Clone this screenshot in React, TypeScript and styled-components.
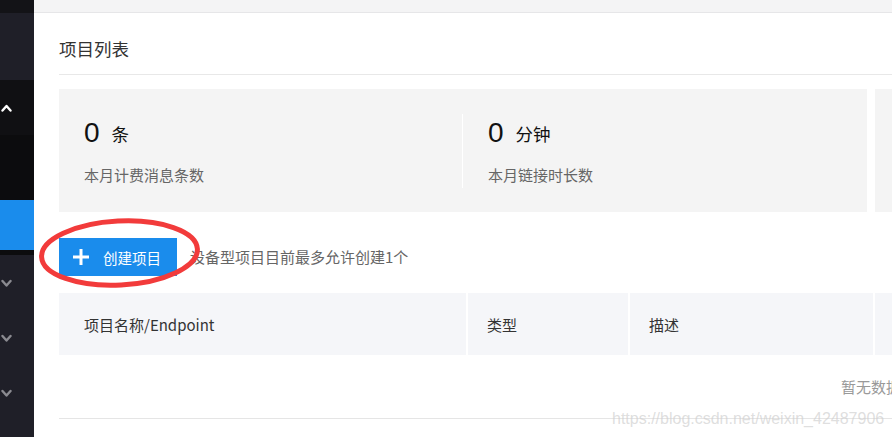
import React from "react";
import styled, { createGlobalStyle } from "styled-components";

const GlobalStyle = createGlobalStyle`
  html, body { margin: 0; padding: 0; background: #fff; overflow: hidden; }
  body { font-family: "Noto Sans CJK SC", "Noto Sans", sans-serif; }
  * { box-sizing: border-box; }
`;

const Page = styled.div`
  display: flex;
  width: 892px;
  height: 437px;
  overflow: hidden;
  position: relative;
`;

const Sidebar = styled.nav`
  width: 34px;
  flex: 0 0 34px;
  display: flex;
  flex-direction: column;
  background: #1f1f28;
`;

const MenuBlock = styled.div<{ $h: number; $bg: string }>`
  height: ${(p) => p.$h}px;
  flex: 0 0 ${(p) => p.$h}px;
  background: ${(p) => p.$bg};
  display: flex;
  align-items: center;
  padding-left: 1px;
`;

const Main = styled.main`
  flex: 1;
  min-width: 0;
  display: flex;
  flex-direction: column;
  overflow: hidden;
`;

const TopBar = styled.div`
  height: 13px;
  flex: 0 0 13px;
  background: #f4f4f5;
  border-bottom: 1px solid #e6e6e8;
`;

const Content = styled.div`
  width: 1674px;
  padding: 0 25px;
  display: flex;
  flex-direction: column;
`;

const TitleRow = styled.div`
  padding: 24px 0 14px;
  border-bottom: 1px solid #e8e8e8;
  font-size: 17.5px;
  line-height: 23px;
  color: #333;
`;

const StatsRow = styled.div`
  margin-top: 14px;
  display: grid;
  grid-template-columns: 808px 808px;
  gap: 8px;
`;

const StatCard = styled.div`
  height: 123px;
  background: #f4f4f4;
  display: grid;
  grid-template-columns: 403px 1fr;
  align-items: center;
`;

const StatItem = styled.div<{ $divider?: boolean }>`
  height: 74px;
  padding-left: 25px;
  border-left: ${(p) => (p.$divider ? "1px solid #ffffff" : "none")};
  display: flex;
  flex-direction: column;
`;

const StatValue = styled.div`
  height: 38px;
  display: flex;
  align-items: center;
  gap: 12px;
  color: #111;
`;

const Num = styled.span`
  font-size: 28px;
  line-height: 38px;
  font-family: "Liberation Sans", "Noto Sans", sans-serif;
`;

const Unit = styled.span`
  font-size: 17.5px;
  line-height: 24px;
  margin-top: 3px;
`;

const StatLabel = styled.div`
  margin-top: 13px;
  font-size: 15px;
  line-height: 20px;
  color: #666;
`;

const ActionRow = styled.div`
  position: relative;
  margin-top: 26px;
  height: 38px;
  display: flex;
  align-items: center;
  gap: 13px;
`;

const PrimaryButton = styled.button`
  width: 118px;
  height: 38px;
  border: none;
  background: #1a8cec;
  color: #fff;
  display: flex;
  align-items: center;
  padding: 0 0 0 13px;
  font-family: inherit;
  font-size: 14.5px;
  cursor: pointer;
`;

const PlusBox = styled.span`
  width: 18px;
  height: 18px;
  margin-right: 13px;
  display: inline-flex;
`;

const Hint = styled.span`
  font-size: 15px;
  line-height: 20px;
  color: #666;
`;

const Annotation = styled.svg`
  position: absolute;
  left: -22px;
  top: -22px;
  width: 170px;
  height: 76px;
  overflow: visible;
  pointer-events: none;
`;

const Table = styled.div`
  margin-top: 17px;
  width: 1624px;
  border-bottom: 1px solid #e5e5e5;
`;

const HeaderRow = styled.div`
  height: 62px;
  display: grid;
  grid-template-columns: 407px 162px 245px 1fr;
  background: #f5f6f9;
`;

const HeaderCell = styled.div<{ $pad: number; $first?: boolean }>`
  display: flex;
  align-items: center;
  padding-left: ${(p) => p.$pad}px;
  border-left: ${(p) => (p.$first ? "none" : "2px solid #fff")};
  font-size: 15px;
  color: #333;
`;

const EmptyRow = styled.div`
  height: 63px;
  display: flex;
  align-items: center;
  justify-content: center;
  padding-bottom: 1px;
  font-size: 15px;
  color: #999;
`;

const Watermark = styled.div`
  position: absolute;
  left: 612px;
  top: 409px;
  font-family: "Liberation Sans", Arial, sans-serif;
  font-size: 16px;
  line-height: 20px;
  color: rgba(205, 205, 205, 0.65);
  pointer-events: none;
  white-space: nowrap;
`;

const Chevron = ({ up, color }: { up?: boolean; color: string }) => (
  <svg width="11" height="8" viewBox="0 0 11 8">
    <polyline
      points={up ? "1.5,6.5 5.5,2 9.5,6.5" : "1.5,2 5.5,6.5 9.5,2"}
      fill="none"
      stroke={color}
      strokeWidth="2.4"
      strokeLinecap="round"
      strokeLinejoin="round"
    />
  </svg>
);

const menu: { h: number; bg: string; chevron?: "up" | "down" }[] = [
  { h: 13, bg: "#131317" },
  { h: 67, bg: "#1f1f28" },
  { h: 55, bg: "#101013", chevron: "up" },
  { h: 65, bg: "#0c0c0e" },
  { h: 50, bg: "#1a8cec" },
  { h: 5, bg: "#0c0c0e" },
  { h: 55, bg: "#1f1f28", chevron: "down" },
  { h: 55, bg: "#1f1f28", chevron: "down" },
  { h: 55, bg: "#1f1f28", chevron: "down" },
];

export default function App() {
  return (
    <>
      <GlobalStyle />
      <Page>
        <Sidebar>
          {menu.map((m, i) => (
            <MenuBlock key={i} $h={m.h} $bg={m.bg}>
              {m.chevron === "up" && <Chevron up color="#ffffff" />}
              {m.chevron === "down" && <Chevron color="#8a8a90" />}
            </MenuBlock>
          ))}
        </Sidebar>
        <Main>
          <TopBar />
          <Content>
            <TitleRow>项目列表</TitleRow>
            <StatsRow>
              <StatCard>
                <StatItem>
                  <StatValue>
                    <Num>0</Num>
                    <Unit>条</Unit>
                  </StatValue>
                  <StatLabel>本月计费消息条数</StatLabel>
                </StatItem>
                <StatItem $divider>
                  <StatValue>
                    <Num>0</Num>
                    <Unit>分钟</Unit>
                  </StatValue>
                  <StatLabel>本月链接时长数</StatLabel>
                </StatItem>
              </StatCard>
              <StatCard />
            </StatsRow>
            <ActionRow>
              <PrimaryButton>
                <PlusBox>
                  <svg width="18" height="18" viewBox="0 0 18 18">
                    <path d="M9 1v16M1 9h16" stroke="#fff" strokeWidth="3" />
                  </svg>
                </PlusBox>
                创建项目
              </PrimaryButton>
              <Hint>设备型项目目前最多允许创建1个</Hint>
              <Annotation viewBox="0 0 170 76">
                <ellipse
                  cx="82.5"
                  cy="37"
                  rx="78"
                  ry="32"
                  fill="none"
                  stroke="#f23b3b"
                  strokeWidth="5"
                  transform="rotate(-3 82.5 37)"
                />
              </Annotation>
            </ActionRow>
            <Table>
              <HeaderRow>
                <HeaderCell $first $pad={25}>项目名称/Endpoint</HeaderCell>
                <HeaderCell $pad={19}>类型</HeaderCell>
                <HeaderCell $pad={19}>描述</HeaderCell>
                <HeaderCell $pad={19} />
              </HeaderRow>
              <EmptyRow>暂无数据</EmptyRow>
            </Table>
          </Content>
        </Main>
        <Watermark>https://blog.csdn.net/weixin_42487906</Watermark>
      </Page>
    </>
  );
}
